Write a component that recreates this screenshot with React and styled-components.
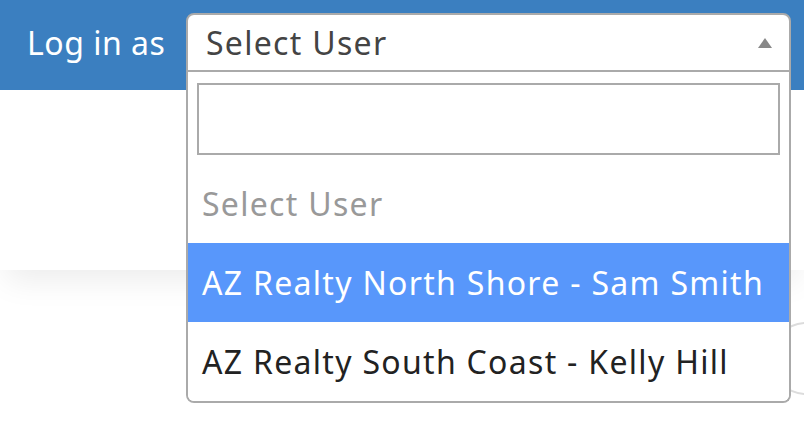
import React from "react";
import styled, { createGlobalStyle } from "styled-components";

const GlobalStyle = createGlobalStyle`
  html, body { margin: 0; padding: 0; background: #fff; overflow: hidden; }
  body { font-family: "Noto Sans", "Open Sans", sans-serif; }
  * { box-sizing: border-box; }
`;

const Page = styled.div`
  width: 804px;
  height: 444px;
  position: relative;
  overflow: hidden;
`;

const Header = styled.header`
  height: 90px;
  background: #3b7fc0;
  display: grid;
  grid-template-columns: 159px 605px;
  align-items: start;
  padding: 13px 0 0 27px;
  position: relative;
  z-index: 2;
`;

const Label = styled.span`
  color: #fff;
  font-size: 32px;
  line-height: 59px;
  letter-spacing: 0.5px;
`;

const SelectWrap = styled.div`
  position: relative;
`;

const Selection = styled.div`
  height: 59px;
  background: #fff;
  border: 2px solid #aaa;
  border-radius: 8px 8px 0 0;
  display: flex;
  align-items: center;
  justify-content: space-between;
  padding: 0 17px 0 18px;
  color: #444;
  font-size: 32px;
  line-height: 55px;
  letter-spacing: 1.3px;
`;

const Arrow = styled.span`
  width: 0;
  height: 0;
  border-style: solid;
  border-width: 0 7.5px 10px 7.5px;
  border-color: transparent transparent #888 transparent;
`;

const Dropdown = styled.div`
  position: absolute;
  top: 100%;
  left: 0;
  width: 605px;
  background: #fff;
  border: 2px solid #aaa;
  border-top: none;
  border-radius: 0 0 8px 8px;
  overflow: hidden;
`;

const SearchBox = styled.div`
  padding: 11px 9px 9px 9px;
`;

const SearchInput = styled.input`
  display: block;
  width: 100%;
  height: 72px;
  border: 2px solid #aaa;
  outline: none;
  background: #fff;
  font-family: inherit;
  font-size: 32px;
  padding: 0 8px;
`;

const Options = styled.ul`
  list-style: none;
  margin: 0;
  padding: 0;
`;

const Option = styled.li`
  height: 79px;
  line-height: 79px;
  padding-left: 14px;
  font-size: 32px;
  letter-spacing: 1.3px;
  white-space: nowrap;
  color: ${(p) => (p.$highlighted ? "#fff" : p.$placeholder ? "#999" : "#222")};
  background: ${(p) => (p.$highlighted ? "#5897fb" : "#fff")};
`;

const SubBar = styled.div`
  height: 180px;
  background: #fff;
  box-shadow: 0 16px 30px -6px rgba(0, 0, 0, 0.08);
  position: relative;
  z-index: 1;
`;

const Content = styled.main`
  display: flex;
  justify-content: flex-end;
  padding-top: 52px;
`;

const PillButton = styled.button`
  width: 160px;
  height: 73px;
  margin-right: -126px;
  border: 2px solid #dcdcdc;
  border-radius: 37px;
  background: #fff;
`;

export default function App() {
  return (
    <Page>
      <GlobalStyle />
      <Header>
        <Label>Log in as</Label>
        <SelectWrap>
          <Selection>
            <span>Select User</span>
            <Arrow />
          </Selection>
          <Dropdown>
            <SearchBox>
              <SearchInput type="search" aria-label="Search users" />
            </SearchBox>
            <Options>
              <Option $placeholder>Select User</Option>
              <Option $highlighted>AZ Realty North Shore - Sam Smith</Option>
              <Option>AZ Realty South Coast - Kelly Hill</Option>
            </Options>
          </Dropdown>
        </SelectWrap>
      </Header>
      <SubBar />
      <Content>
        <PillButton aria-label="action" />
      </Content>
    </Page>
  );
}
